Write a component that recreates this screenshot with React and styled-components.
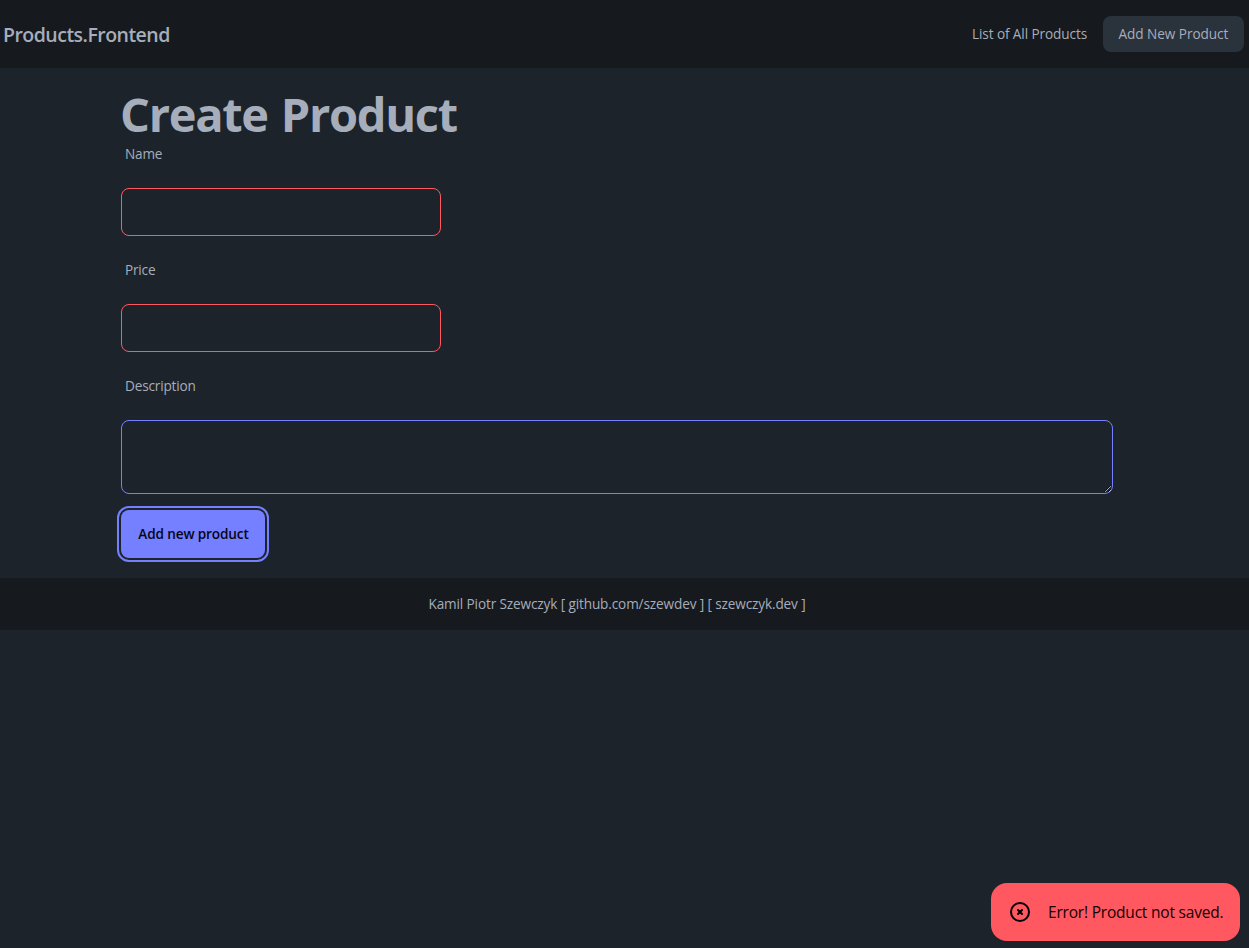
import React from "react";
import styled, { createGlobalStyle } from "styled-components";

const GlobalStyle = createGlobalStyle`
  *, *::before, *::after { box-sizing: border-box; }
  body {
    margin: 0;
    background: #1d232a;
    color: #a6adbb;
    font-family: "Segoe UI", "Open Sans", "Noto Sans", sans-serif;
    font-size: 13.6px;
    line-height: 20px;
  }
`;

const Page = styled.div`
  min-height: 948px;
  display: flex;
  flex-direction: column;
`;

const Navbar = styled.header`
  display: flex;
  align-items: center;
  justify-content: space-between;
  height: 68px;
  padding: 0 5px 0 3px;
  background: #16191e;
`;

const Brand = styled.a`
  font-size: 19.5px;
  line-height: 28px;
  font-weight: 600;
  letter-spacing: -0.52px;
  padding-top: 2px;
`;

const Menu = styled.nav`
  display: flex;
`;

const MenuItem = styled.a`
  display: block;
  width: ${(p) => p.$width}px;
  padding: 8px 0 8px ${(p) => (p.$active ? 15.5 : 16)}px;
  border-radius: 8px;
  white-space: nowrap;
  letter-spacing: ${(p) => (p.$active ? -0.05 : -0.1)}px;
  background: ${(p) => (p.$active ? "#2a323c" : "transparent")};
`;

const Main = styled.main`
  width: 992px;
  height: 510px;
  margin-left: 121px;
  padding-top: 25px;
`;

const Title = styled.h1`
  margin: 0 0 1px -1px;
  font-size: 47px;
  line-height: 42px;
  font-weight: 700;
  letter-spacing: -1.3px;
  word-spacing: 2px;
`;

const Form = styled.form`
  display: flex;
  flex-direction: column;
  align-items: flex-start;
  gap: 16px;
`;

const Label = styled.label`
  padding: 8px 4px;
  letter-spacing: -0.18px;
`;

const Input = styled.input`
  width: 320px;
  height: 48px;
  padding: 0 16px;
  border: 1px solid #ff5861;
  border-radius: 8px;
  background: transparent;
  color: inherit;
  font: inherit;
`;

const Textarea = styled.textarea`
  display: block;
  width: 100%;
  height: 74px;
  padding: 8px 16px;
  border: 1px solid #7480ff;
  border-radius: 8px;
  background: transparent;
  color: inherit;
  font: inherit;
`;

const SubmitButton = styled.button`
  width: 144px;
  height: 48px;
  padding: 0 0 0 1px;
  border: 0;
  border-radius: 8px;
  background: #7480ff;
  color: #050617;
  font: inherit;
  font-weight: 600;
  white-space: nowrap;
  letter-spacing: -0.13px;
  outline: 2px solid #7480ff;
  outline-offset: 2px;
`;

const Footer = styled.footer`
  height: 52px;
  padding: 16px 15px 16px 0;
  text-align: center;
  background: #16191e;
  letter-spacing: -0.13px;
`;

const Toast = styled.div`
  position: fixed;
  right: 9px;
  bottom: 7px;
  width: 249px;
  height: 58px;
  display: flex;
  align-items: center;
  gap: 16px;
  padding-left: 17px;
  border-radius: 16px;
  background: #ff5861;
  color: #160000;
  font-size: 15.5px;
  line-height: 24px;
  letter-spacing: -0.2px;
  white-space: nowrap;
`;

const ErrorIcon = () => (
  <svg width="24" height="24" viewBox="0 0 24 24" fill="none" stroke="#000" strokeWidth="2" strokeLinecap="round" strokeLinejoin="round">
    <path d="M10 14l2-2m0 0l2-2m-2 2l-2-2m2 2l2 2m7-2a9 9 0 11-18 0 9 9 0 0118 0z" />
  </svg>
);

export default function App() {
  return (
    <Page>
      <GlobalStyle />
      <Navbar>
        <Brand>Products.Frontend</Brand>
        <Menu>
          <MenuItem $width={147}>List of All Products</MenuItem>
          <MenuItem $width={141} $active>Add New Product</MenuItem>
        </Menu>
      </Navbar>
      <Main>
        <Title>Create Product</Title>
        <Form>
          <Label htmlFor="name">Name</Label>
          <Input id="name" />
          <Label htmlFor="price">Price</Label>
          <Input id="price" />
          <Label htmlFor="description">Description</Label>
          <Textarea id="description" />
          <SubmitButton type="button">Add new product</SubmitButton>
        </Form>
      </Main>
      <Footer>Kamil Piotr Szewczyk [ github.com/szewdev ] [ szewczyk.dev ]</Footer>
      <Toast role="alert">
        <ErrorIcon />
        <span>Error! Product not saved.</span>
      </Toast>
    </Page>
  );
}
